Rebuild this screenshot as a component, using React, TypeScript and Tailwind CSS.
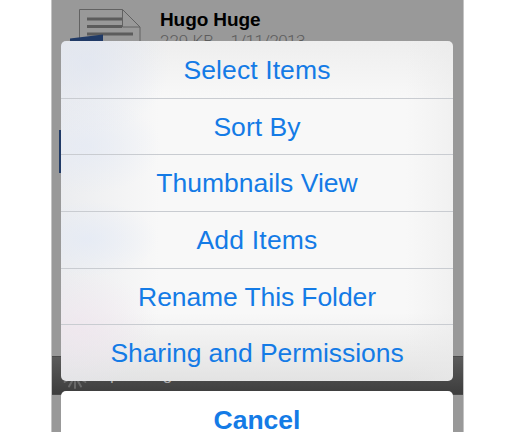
const items = [
  { label: "Select Items", tracking: "tracking-[0.1px]" },
  { label: "Sort By", tracking: "tracking-[0.05px]" },
  { label: "Thumbnails View", tracking: "tracking-[0px]" },
  { label: "Add Items", tracking: "tracking-[0.2px]" },
  { label: "Rename This Folder", tracking: "tracking-[-0.1px]" },
  { label: "Sharing and Permissions", tracking: "tracking-[-0.06px]" },
];

function DocumentIcon() {
  return (
    <svg className="ml-[18px] mt-[8px] shrink-0" width="74" height="60" viewBox="0 0 74 60" fill="none">
      <path d="M9.500 60V1.500h43l17.500 17.500V60" stroke="#626262" />
      <path d="M52.500 1.500V19h17.500" stroke="#626262" />
      <path d="M17 11h35M17 18.500h35M17 26h46" stroke="#5c5c5c" strokeWidth="3" />
      <path d="M0 30.500L33 26.500V60H0z" fill="#203a66" />
    </svg>
  );
}

function Spinner() {
  return (
    <svg width="26" height="26" viewBox="-13 -13 26 26" stroke="#696969" strokeWidth="2" strokeLinecap="round">
      {Array.from({ length: 12 }, (_, i) => (
        <line key={i} x1="0" y1="6" x2="0" y2="12" transform={`rotate(${i * 30})`} />
      ))}
    </svg>
  );
}

export default function App() {
  return (
    <div className="flex h-[432px] w-[515px] justify-center overflow-hidden bg-white font-['Liberation_Sans',Arial,sans-serif]">
      <div className="relative h-[432px] w-[413px] overflow-hidden border-x border-[#c4c4c4] bg-[#999]">
        <div className="flex h-full flex-col">
          <div className="flex h-[130px] shrink-0">
            <DocumentIcon />
            <div className="ml-[16px] pt-[9px] whitespace-nowrap">
              <div className="text-[19px] leading-[22px] font-bold tracking-[-0.1px] text-black">Hugo Huge</div>
              <div className="flex gap-[17px] font-[Roboto,sans-serif] text-[17px] leading-[20px] font-light text-[#5c5c5c]">
                <span>229 KB</span>
                <span className="tracking-[-0.6px]">1/11/2013</span>
              </div>
            </div>
          </div>
          <div className="ml-[7px] h-[43px] w-[30px] shrink-0 bg-[#203a66]" />
          <div className="mt-[183px] flex h-[39px] shrink-0 items-center border-y border-[#4a4a4a] bg-linear-to-b from-[#5b5b5b] to-[#3d3d3d] pl-[10px] text-[#aaa]">
            <Spinner />
            <span className="ml-[10px] pb-px text-[17px] leading-[20px] tracking-[-0.3px]">Uploading items</span>
          </div>
        </div>
        <div className="absolute top-[41px] left-[9px] w-[392px]">
          <div className="grid h-[340px] grid-rows-[58px_56px_57px_57px_56px_56px] overflow-hidden rounded-[5px] bg-[radial-gradient(ellipse_at_25px_20px,#dfe5f2aa_0px,#dfe5f200_85px),radial-gradient(ellipse_at_25px_105px,#e3e9f5aa_0px,#e3e9f500_75px),radial-gradient(ellipse_at_27px_198px,#e2e9f6aa_0px,#e2e9f600_70px),radial-gradient(ellipse_at_20px_287px,#f1e5eeaa_0px,#f1e5ee00_75px),linear-gradient(to_right,#e3e5e999_0%,#e3e5e900_25%,#e9e9e900_88%,#e9e9e980_100%),linear-gradient(to_bottom,#eeeeee_0%,#f8f8f8_17%,#f8f8f8_80%,#e3e3e3_100%)] text-[#147be6]">
            {items.map((item, i) => (
              <div
                key={item.label}
                className={`flex items-center justify-center pt-px whitespace-nowrap text-[26.5px] leading-none ${item.tracking} ${i < 5 ? "border-b border-[#c9ccd1]" : ""}`}
              >
                {item.label}
              </div>
            ))}
          </div>
          <div className="mt-[10px] flex h-[57px] items-center justify-center rounded-[5px] bg-white pt-[2px] text-[26.5px] font-bold text-[#147be6]">
            Cancel
          </div>
        </div>
      </div>
    </div>
  );
}
